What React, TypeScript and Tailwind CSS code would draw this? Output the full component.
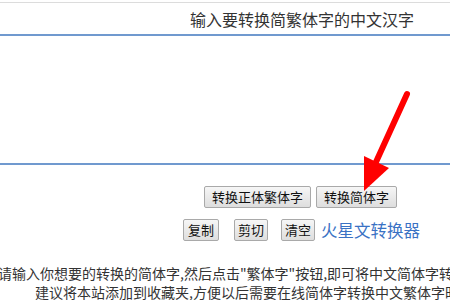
import React from "react";

const font = { fontFamily: '"Noto Sans CJK SC", "Noto Sans", sans-serif' };

const Btn = ({ label, className = "" }: { label: string; className?: string }) => (
  <button
    className={`h-[22px] whitespace-nowrap border border-[#a9a9a9] rounded-[2px] bg-gradient-to-b from-[#f6f6f6] to-[#dedede] text-[13px] leading-[20px] text-[#111] ${className}`}
  >
    {label}
  </button>
);

export default function App() {
  return (
    <div className="w-[450px] h-[300px] overflow-hidden bg-white relative" style={font}>
      <div className="mt-[2px] border-t border-[#dcdcdc]" />
      <div className="h-[31px] pl-[190px] pt-[5px] text-[16px] leading-[22px] text-[#333] whitespace-nowrap">
        输入要转换简繁体字的中文汉字
      </div>
      <div className="h-[131px] border-y-2 border-[#7099cf]" />
      <div className="flex gap-[5px] pl-[204px] pt-[21px]">
        <Btn label="转换正体繁体字" className="px-[7px]" />
        <Btn label="转换简体字" className="px-[7px]" />
      </div>
      <div className="flex items-center pl-[183px] pt-[11px]">
        <Btn label="复制" className="px-[4px]" />
        <Btn label="剪切" className="px-[3px] ml-[15px]" />
        <Btn label="清空" className="px-[3px] ml-[13px]" />
        <span className="ml-[6px] text-[16.5px] leading-[20px] text-[#3a72c4] whitespace-nowrap">火星文转换器</span>
      </div>
      <div className="pt-[23px] text-[14px] leading-[19px] text-[#333] whitespace-nowrap">
        <div className="-ml-[2px]">请输入你想要的转换的简体字,然后点击"繁体字"按钮,即可将中文简体字转换成繁体字</div>
        <div className="pl-[35px]">建议将本站添加到收藏夹,方便以后需要在线简体字转换中文繁体字时使用</div>
      </div>
      <svg className="absolute left-0 top-0 pointer-events-none" width="450" height="300">
        <line x1="407" y1="94" x2="376" y2="162" stroke="#f00" strokeWidth="6" strokeLinecap="round" />
        <polygon points="364,156 389,168 364,191" fill="#f00" />
      </svg>
    </div>
  );
}
